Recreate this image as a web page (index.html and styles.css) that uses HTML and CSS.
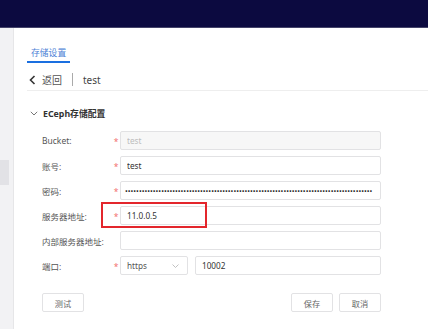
FILE: index.html
```html
<!DOCTYPE html>
<html lang="zh-CN">
<head>
    <meta charset="UTF-8">
    <title>存储设置</title>
    <link rel="stylesheet" href="styles.css">
</head>
<body>
    <div class="topbar"></div>

    <div class="main">
        <div class="sidebar">
            <div class="side-item"></div>
        </div>

        <div class="content">
            <div class="tabs">
                <div class="tab active">存储设置</div>
            </div>

            <div class="back-row">
                <svg class="back-icon" width="7" height="10" viewBox="0 0 7 10">
                    <polyline points="5.5,1 1.5,5 5.5,9" fill="none" stroke="#333" stroke-width="1.6"/>
                </svg>
                <span class="back-text">返回</span>
                <span class="divider"></span>
                <span class="back-name">test</span>
            </div>

            <div class="section-title">
                <svg class="fold-icon" width="8" height="5" viewBox="0 0 8 5">
                    <polyline points="0.8,0.8 4,4 7.2,0.8" fill="none" stroke="#777" stroke-width="1"/>
                </svg>
                <span>ECeph存储配置</span>
            </div>

            <div class="form">
                <div class="row">
                    <label>Bucket:</label>
                    <span class="req">*</span>
                    <input class="field" type="text" value="test" disabled>
                </div>
                <div class="row">
                    <label>账号:</label>
                    <span class="req">*</span>
                    <input class="field" type="text" value="test">
                </div>
                <div class="row">
                    <label>密码:</label>
                    <span class="req">*</span>
                    <div class="field password"><span>•••••••••••••••••••••••••••••••••••••••••••••••••••••••••••••••••••••••••••••••••••••••••</span></div>
                </div>
                <div class="row">
                    <label>服务器地址:</label>
                    <span class="req">*</span>
                    <input class="field" type="text" value="11.0.0.5">
                    <div class="highlight"></div>
                </div>
                <div class="row">
                    <label>内部服务器地址:</label>
                    <span class="req"></span>
                    <input class="field" type="text" value="">
                </div>
                <div class="row">
                    <label>端口:</label>
                    <span class="req">*</span>
                    <div class="port-group">
                        <div class="select">
                            <span>https</span>
                            <svg width="7" height="4" viewBox="0 0 7 4">
                                <polyline points="0.5,0.5 3.5,3.5 6.5,0.5" fill="none" stroke="#bbb" stroke-width="0.9"/>
                            </svg>
                        </div>
                        <input class="field" type="text" value="10002">
                    </div>
                </div>
            </div>

            <div class="actions">
                <button class="btn">测试</button>
                <div class="actions-right">
                    <button class="btn">保存</button>
                    <button class="btn">取消</button>
                </div>
            </div>
        </div>
    </div>
</body>
</html>
```

FILE: styles.css
```css
* {
    margin: 0;
    padding: 0;
    box-sizing: border-box;
}

html, body {
    width: 428px;
    height: 329px;
    overflow: hidden;
}

body {
    font-family: "Noto Sans", "Noto Sans CJK SC", sans-serif;
    background: #fff;
    color: #555;
}

.topbar {
    height: 28px;
    background: #0c0a40;
    border-bottom: 1px solid #45446a;
}

.main {
    display: flex;
    height: 301px;
}

/* left strip */
.sidebar {
    width: 14px;
    background: #f2f2f4;
    border-right: 1px solid #e6e6e8;
    flex-shrink: 0;
}

.side-item {
    margin-top: 132px;
    width: 9px;
    height: 25px;
    background: #e2e2e6;
}

.content {
    flex: 1;
    padding-left: 13px;
}

.tabs {
    display: flex;
    padding-top: 18px;
}

.tab {
    font-size: 8.8px;
    line-height: 14px;
    padding: 0 4px 1px;
    color: #4d82d6;
    border-bottom: 2px solid #1a6fe0;
}

.back-row {
    display: flex;
    align-items: center;
    height: 28px;
    padding-top: 6px;
    border-bottom: 1px solid #eeeeee;
    font-size: 10px;
    color: #555;
}

.back-icon {
    margin-left: 2px;
    margin-right: 6px;
}

.divider {
    width: 1px;
    height: 13px;
    background: #aaa;
    margin: 0 10px;
}

.back-name {
    color: #444;
}

.section-title {
    display: flex;
    align-items: center;
    margin-top: 15px;
    height: 14px;
    font-size: 8.8px;
    font-weight: bold;
    color: #333;
}

.fold-icon {
    margin-left: 3px;
    margin-right: 5px;
}

.form {
    margin-top: 11px;
    padding-left: 15px;
    display: flex;
    flex-direction: column;
    gap: 6px;
}

.row {
    position: relative;
    display: grid;
    grid-template-columns: 70px 8px 261px;
    align-items: center;
    height: 19px;
}

.row label {
    font-size: 8.5px;
    color: #555;
}

.req {
    color: #f26d6d;
    font-size: 8.5px;
    text-align: center;
    padding-top: 2px;
}

.field {
    height: 19px;
    width: 100%;
    border: 1px solid #e2e2e4;
    border-radius: 2px;
    padding: 0 6px;
    font-family: "Noto Sans", "Noto Sans CJK SC", sans-serif;
    font-size: 8.2px;
    color: #333;
    background: #fff;
    outline: none;
}

.field:disabled {
    background: #f7f7f7;
    color: #bdbdbd;
}

.password {
    display: flex;
    align-items: center;
    overflow: hidden;
    white-space: nowrap;
    font-size: 7.4px;
    padding: 0 4px 0 4px;
    color: #222;
}

/* red annotation box */
.highlight {
    position: absolute;
    left: 59px;
    top: -4px;
    width: 106px;
    height: 26px;
    border: 2px solid #e3262c;
}

.port-group {
    display: flex;
    gap: 7px;
}

.port-group .field {
    flex: 1;
}

.select {
    width: 68px;
    height: 19px;
    flex-shrink: 0;
    display: flex;
    align-items: center;
    justify-content: space-between;
    padding: 0 8px 0 6px;
    border: 1px solid #e2e2e4;
    border-radius: 2px;
    font-size: 8.2px;
    color: #555;
}

.actions {
    display: flex;
    justify-content: space-between;
    margin-top: 18px;
    padding-left: 15px;
    width: 354px;
}

.actions-right {
    display: flex;
    gap: 6px;
}

.btn {
    width: 42px;
    height: 19px;
    background: #fff;
    border: 1px solid #e2e2e4;
    border-radius: 2px;
    font-family: "Noto Sans", "Noto Sans CJK SC", sans-serif;
    font-size: 8.2px;
    color: #666;
}
```
